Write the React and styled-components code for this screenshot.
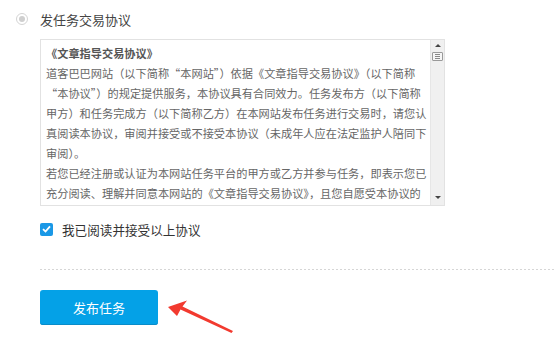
import React from "react";
import styled, { createGlobalStyle } from "styled-components";

const GlobalStyle = createGlobalStyle`
  html, body {
    margin: 0;
    padding: 0;
    background: #fff;
  }
  body {
    font-family: "Microsoft YaHei", "Noto Sans CJK SC", "Noto Sans", sans-serif;
  }
`;

const Page = styled.div`
  position: relative;
  width: 554px;
  height: 341px;
  overflow: hidden;
  padding-top: 10px;
  box-sizing: border-box;
`;

const TitleRow = styled.div`
  display: flex;
  align-items: center;
  height: 18px;
  padding-left: 16px;
  gap: 12px;
  font-size: 13px;
  color: #444;
`;

const Radio = styled.span`
  width: 12px;
  height: 12px;
  box-sizing: border-box;
  border: 1px solid #d4d4d4;
  border-radius: 50%;
  display: flex;
  align-items: center;
  justify-content: center;
  &::after {
    content: "";
    width: 6px;
    height: 6px;
    border-radius: 50%;
    background: #cfcfcf;
  }
`;

const AgreementBox = styled.div`
  display: flex;
  margin: 11px 0 0 40px;
  width: 405px;
  height: 167px;
  box-sizing: border-box;
  border: 1px solid #e2e2e2;
`;

const AgreementText = styled.div`
  flex: 1;
  overflow: hidden;
  padding: 3px 4px 0 5px;
  font-size: 11.2px;
  line-height: 20px;
  color: #666;
  font-feature-settings: "fwid";
`;

const Line = styled.div`
  white-space: nowrap;
  font-weight: ${(p) => (p.$bold ? "bold" : "normal")};
  color: ${(p) => (p.$bold ? "#555" : "inherit")};
`;

const Scrollbar = styled.div`
  width: 13px;
  display: flex;
  flex-direction: column;
  align-items: center;
  background: #f0f0f0;
  border-left: 1px solid #e6e6e6;
  padding: 4px 0 4px;
`;

const ArrowUp = styled.span`
  width: 0;
  height: 0;
  border-left: 3px solid transparent;
  border-right: 3px solid transparent;
  border-bottom: 3px solid #444;
`;

const ArrowDown = styled.span`
  width: 0;
  height: 0;
  border-left: 3px solid transparent;
  border-right: 3px solid transparent;
  border-top: 3px solid #444;
  margin-top: auto;
  margin-bottom: 2px;
`;

const Thumb = styled.div`
  margin-top: 5px;
  width: 11px;
  height: 9px;
  box-sizing: border-box;
  border: 1px solid #9a9a9a;
  border-radius: 1px;
  background: #f6f6f6;
  display: flex;
  flex-direction: column;
  align-items: center;
  justify-content: center;
  gap: 1px;
  span {
    width: 5px;
    height: 1px;
    background: #888;
  }
`;

const CheckRow = styled.label`
  display: flex;
  align-items: center;
  gap: 9px;
  margin: 16px 0 0 40px;
  height: 14px;
  font-size: 12.6px;
  color: #333;
`;

const CheckBox = styled.span`
  width: 13px;
  height: 13px;
  border-radius: 2px;
  background: #1a98e6;
  display: flex;
  align-items: center;
  justify-content: center;
`;

const Divider = styled.div`
  margin: 33px 0 0 40px;
  height: 1px;
  background: repeating-linear-gradient(to right, #d6d6d6 0 2px, transparent 2px 4px);
`;

const SubmitButton = styled.button`
  margin: 20px 0 0 40px;
  width: 118px;
  height: 35px;
  border: none;
  border-radius: 3px;
  background: #04a1e7;
  box-shadow: inset 0 -1px 0 #0a8cc8;
  color: #fff;
  font-family: inherit;
  font-size: 13px;
  display: block;
`;

const Pointer = styled.svg`
  position: absolute;
  left: 165px;
  top: 300px;
`;

const lines = [
  "道客巴巴网站（以下简称“本网站”）依据《文章指导交易协议》（以下简称",
  "“本协议”）的规定提供服务，本协议具有合同效力。任务发布方（以下简称",
  "甲方）和任务完成方（以下简称乙方）在本网站发布任务进行交易时，请您认",
  "真阅读本协议，审阅并接受或不接受本协议（未成年人应在法定监护人陪同下",
  "审阅）。",
  "若您已经注册或认证为本网站任务平台的甲方或乙方并参与任务，即表示您已",
  "充分阅读、理解并同意本网站的《文章指导交易协议》，且您自愿受本协议的",
];

const App = () => (
  <Page>
    <GlobalStyle />
    <TitleRow>
      <Radio />
      <span>发任务交易协议</span>
    </TitleRow>

    <AgreementBox>
      <AgreementText>
        <Line $bold>《文章指导交易协议》</Line>
        {lines.map((l, i) => (
          <Line key={i}>{l}</Line>
        ))}
      </AgreementText>
      <Scrollbar>
        <ArrowUp />
        <Thumb>
          <span />
          <span />
          <span />
        </Thumb>
        <ArrowDown />
      </Scrollbar>
    </AgreementBox>

    <CheckRow>
      <CheckBox>
        <svg width="9" height="8" viewBox="0 0 9 8">
          <path d="M1 4.2 L3.5 6.5 L8 1.3" fill="none" stroke="#fff" strokeWidth="1.8" />
        </svg>
      </CheckBox>
      <span>我已阅读并接受以上协议</span>
    </CheckRow>

    <Divider />

    <SubmitButton>发布任务</SubmitButton>

    <Pointer width="72" height="36" viewBox="0 0 72 36">
      <path d="M3 7 L22 0.5 L17.5 6.5 L68 31 L66.5 33 L15.5 9.5 L12 16 Z" fill="#f23a2f" />
    </Pointer>
  </Page>
);

export default App;
